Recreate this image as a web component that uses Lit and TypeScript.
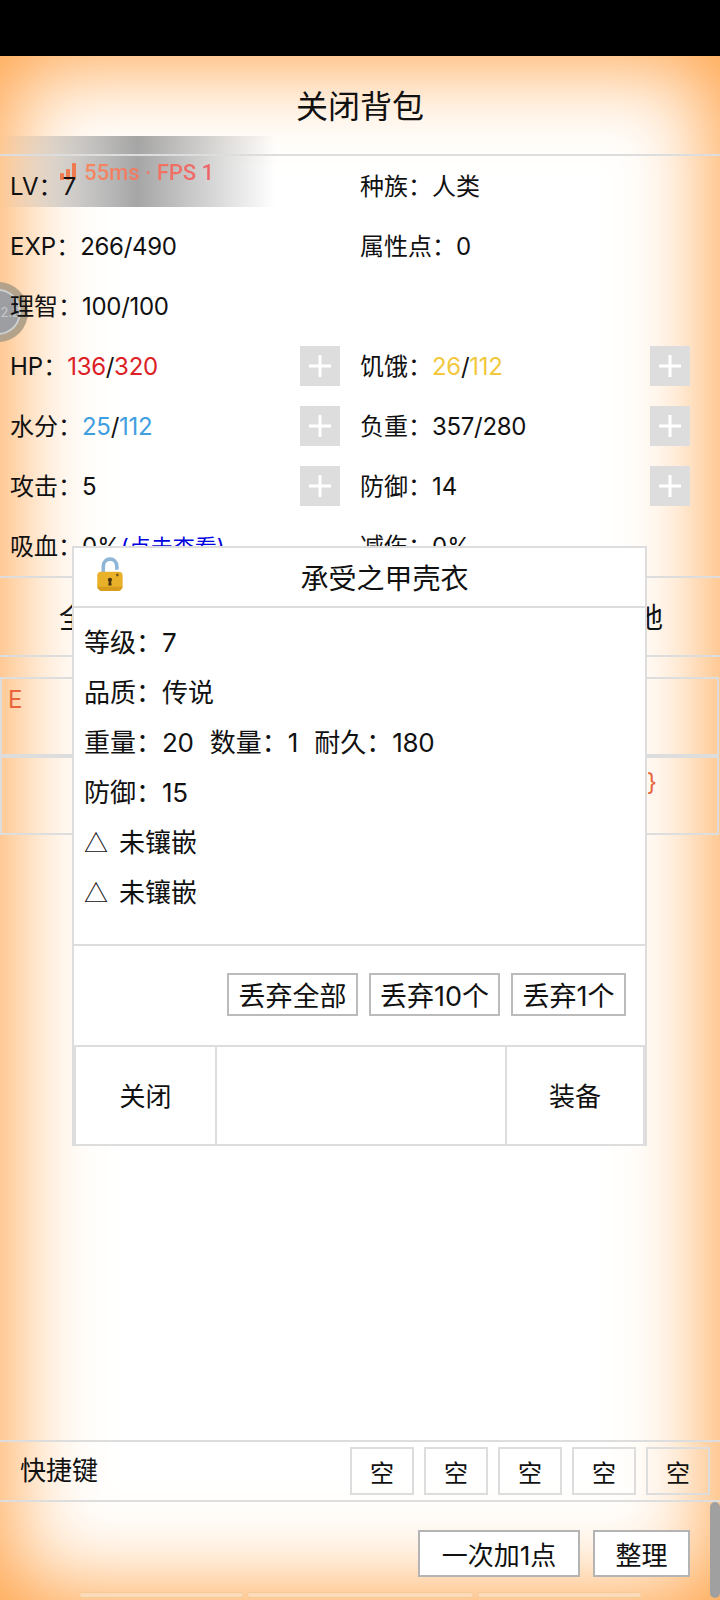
import { LitElement, html, css, svg } from "lit";
import { customElement } from "lit/decorators.js";

const plus = svg`<svg width="40" height="40" viewBox="0 0 40 40"><path d="M20 9v22M9 20h22" stroke="#fff" stroke-width="3" fill="none"/></svg>`;
const lock = svg`<svg width="32" height="36" viewBox="0 0 30 34"><path d="M7.7 15V9c0-4.600 3-7 6.400-7s6.400 2.400 6.400 7v3" fill="none" stroke="#8fb6d6" stroke-width="3.400"/><path d="M2 17.500c0-2 1.500-3.500 3.500-3.500h17c2 0 3.500 1.500 3.500 3.500v10c0 2.500-2 4.500-4.500 4.500h-15C4 32 2 30 2 27.500z" fill="#e9b02a"/><path d="M2 28c.5 2.500 2.500 4 4.500 4h15c2 0 4-1.500 4.500-4z" fill="#d89c1c"/><circle cx="14" cy="21.500" r="2" fill="#4a3410"/><path d="M13 22.500h2l.6 4.500h-3.200z" fill="#4a3410"/><circle cx="21" cy="17" r="1.300" fill="#7a5a18"/></svg>`;
const bars = svg`<svg width="16" height="18" viewBox="0 0 16 18"><g fill="#f07a50"><rect x="0" y="10" width="4" height="7" rx="1"/><rect x="6" y="6" width="4" height="11" rx="1"/><rect x="12" y="0" width="4" height="17" rx="1"/></g></svg>`;

@customElement("app-root")
export class AppRoot extends LitElement {
  static styles = css`
    :host {
      display: block;
      width: 720px;
      height: 1600px;
      position: relative;
      overflow: hidden;
      background: #000;
      font-family: "Inter", "Noto Sans CJK SC", sans-serif;
      color: #111;
      font-size: 24px;
    }
    .bg {
      position: absolute;
      inset: 56px 0 0 0;
      background: #fff;
      box-shadow: inset 0 0 90px 8px #ff9f40;
    }
    .main {
      position: absolute;
      inset: 56px 0 0 0;
      display: flex;
      flex-direction: column;
    }
    .n { letter-spacing: -0.3px; }
    .head {
      flex: none;
      display: flex;
      align-items: center;
      justify-content: center;
      font-size: 32px;
      border-bottom: 2px solid #ddd;
      padding-bottom: 3px;
      box-sizing: border-box;
      height: 100px;
    }
    .grid {
      display: grid;
      grid-template-columns: 350px 350px;
      grid-auto-rows: 60px;
      padding-left: 10px;
    }
    .cell {
      display: flex;
      align-items: center;
      padding-right: 20px;
      justify-content: space-between;
    }
    .cell > .t { padding-bottom: 4px; }
    .plus {
      width: 40px;
      height: 40px;
      background: #ddd;
      display: flex;
    }
    .red { color: #dc2026; }
    .yellow { color: #f2c83c; }
    .blue { color: #3f9ee0; }
    .link { color: #0000e0; font-size: 22px; }
    .tabs {
      flex: none;
      height: 81px;
      box-sizing: border-box;
      border-top: 2px solid #ddd;
      border-bottom: 2px solid #ddd;
      display: flex;
      justify-content: space-between;
      align-items: center;
      padding: 0 57px 2px 59px;
      font-size: 28px;
    }
    .items {
      margin-top: 20px;
      padding: 0 1px 0 0;
      display: flex;
      flex-direction: column;
    }
    .item {
      height: 79px;
      box-sizing: border-box;
      border: 2px solid #ddd;
      color: #e8643c;
      padding: 7px 6px;
      display: flex;
      line-height: 28px;
    }
    .item.end {
      justify-content: flex-end;
      padding: 11px 60px 0 0;
    }
    .spacer { flex: 1; }
    .quick {
      flex: none;
      height: 62px;
      box-sizing: border-box;
      border-top: 2px solid #ddd;
      border-bottom: 2px solid #ddd;
      display: flex;
      align-items: center;
      padding: 0 10px 0 20px;
      font-size: 26px;
    }
    .quick .label { flex: 1; padding-bottom: 6px; }
    .slots { display: flex; gap: 10px; }
    .slot {
      width: 64px;
      height: 48px;
      box-sizing: border-box;
      border: 2px solid #ddd;
      display: flex;
      align-items: center;
      justify-content: center;
      font-size: 24px;
    }
    .actions {
      flex: none;
      height: 98px;
      box-sizing: border-box;
      padding: 28px 30px 0 0;
      display: flex;
      justify-content: flex-end;
      gap: 13px;
    }
    .btn {
      height: 47px;
      box-sizing: border-box;
      border: 2px solid #b4b4b4;
      background: #fff;
      display: flex;
      align-items: center;
      justify-content: center;
      font-size: 26px;
    }
    .b1 { width: 162px; }
    .b2 { width: 97px; }
    .dialog {
      position: absolute;
      left: 72px;
      top: 546px;
      width: 575px;
      height: 600px;
      box-sizing: border-box;
      border: 2px solid #ddd;
      background: #fff;
      display: flex;
      flex-direction: column;
    }
    .d-head {
      height: 60px;
      flex: none;
      box-sizing: border-box;
      border-bottom: 2px solid #ddd;
      display: flex;
      align-items: center;
      justify-content: center;
      font-size: 28px;
      position: relative;
      padding-left: 50px;
    }
    .d-lock { position: absolute; left: 21px; top: 9px; display: flex; }
    .d-body {
      height: 338px;
      flex: none;
      box-sizing: border-box;
      padding: 10px 0 0 10px;
      font-size: 26px;
      line-height: 50px;
      border-bottom: 2px solid #ddd;
    }
    .d-body > div { height: 50px; }
    .d-body .gap { margin-left: 16px; }
    .tri {
      font-family: "Noto Sans CJK SC", sans-serif;
      display: inline-block;
      width: 35px;
      font-size: 24px;
      line-height: 24px;
    }
    .drops {
      height: 99px;
      flex: none;
      box-sizing: border-box;
      padding: 27px 19px 0 0;
      display: flex;
      justify-content: flex-end;
      gap: 11px;
    }
    .drop {
      height: 43px;
      box-sizing: border-box;
      border: 2px solid #bbb;
      display: flex;
      align-items: center;
      justify-content: center;
      font-size: 27px;
      white-space: nowrap;
    }
    .w131 { width: 131px; }
    .w115 { width: 115px; }
    .table {
      flex: 1;
      display: grid;
      grid-template-columns: 139px 290px 1fr;
      border: 2px solid #ddd;
      border-bottom-width: 0;
      font-size: 26px;
    }
    .table div {
      display: flex;
      align-items: center;
      justify-content: center;
      padding-bottom: 2px;
    }
    .table div + div { border-left: 2px solid #ddd; }
    .fps {
      position: absolute;
      left: 0;
      top: 136px;
      width: 275px;
      height: 71px;
      background: linear-gradient(90deg, rgba(150,150,150,0), rgba(150,150,150,.85) 50%, rgba(150,150,150,0));
      display: flex;
      align-items: flex-start;
      gap: 8px;
      padding: 27px 0 0 60px;
      box-sizing: border-box;
    }
    .fps-text {
      background: linear-gradient(90deg, #f5875f, #ee6468);
      -webkit-background-clip: text;
      background-clip: text;
      color: transparent;
      font-family: "Roboto", sans-serif;
      font-weight: 500;
      font-size: 22px;
      line-height: 20px;
    }
    .ball {
      position: absolute;
      left: -32px;
      top: 282px;
      width: 60px;
      height: 60px;
      box-sizing: border-box;
      border-radius: 50%;
      border: 7px solid rgba(190,165,130,.7);
      background: #9c9ea2;
      box-shadow: inset 0 0 0 2px rgba(255,255,255,.5);
      display: flex;
      align-items: center;
      justify-content: flex-end;
      padding-right: 1px;
      color: rgba(255,255,255,.45);
      font-size: 13px;
    }
    .scroll {
      position: absolute;
      right: 0;
      top: 1502px;
      width: 10px;
      height: 96px;
      border-radius: 5px;
      background: #a0a0a0;
    }
    .strips {
      position: absolute;
      left: 79px;
      bottom: 2px;
      display: flex;
      gap: 3px;
    }
    .strip {
      height: 6px;
      box-sizing: border-box;
      border: 1px solid #f6c998;
      background: #fcdcb8;
      border-radius: 3px;
    }
    .s165 { width: 165px; }
    .s227 { width: 227px; }
  `;

  private slash(a: string, b: string, cls: string) {
    return html`<span class="n"><span class=${cls}>${a}</span>/<span class=${cls}>${b}</span></span>`;
  }

  render() {
    return html`
      <div class="bg"></div>
      <div class="fps">${bars}<span class="fps-text">55ms · FPS 1</span></div>
      <div class="ball">2.2</div>

      <div class="main">
        <div class="head">关闭背包</div>
        <div class="grid">
          <div class="cell"><span class="t">LV：7</span></div>
          <div class="cell"><span class="t">种族：人类</span></div>
          <div class="cell"><span class="t">EXP：<span class="n">266/490</span></span></div>
          <div class="cell"><span class="t">属性点：0</span></div>
          <div class="cell"><span class="t">理智：<span class="n">100/100</span></span></div>
          <div class="cell"></div>
          <div class="cell"><span class="t">HP：${this.slash("136", "320", "red")}</span><span class="plus">${plus}</span></div>
          <div class="cell"><span class="t">饥饿：${this.slash("26", "112", "yellow")}</span><span class="plus">${plus}</span></div>
          <div class="cell"><span class="t">水分：${this.slash("25", "112", "blue")}</span><span class="plus">${plus}</span></div>
          <div class="cell"><span class="t">负重：<span class="n">357/280</span></span><span class="plus">${plus}</span></div>
          <div class="cell"><span class="t">攻击：5</span><span class="plus">${plus}</span></div>
          <div class="cell"><span class="t">防御：14</span><span class="plus">${plus}</span></div>
          <div class="cell"><span class="t">吸血：0%<span class="link">(点击查看)</span></span></div>
          <div class="cell"><span class="t">减伤：0%</span></div>
        </div>
        <div class="tabs"><span>全</span><span>地</span></div>
        <div class="items">
          <div class="item">E</div>
          <div class="item end">}</div>
        </div>
        <div class="spacer"></div>
        <div class="quick">
          <span class="label">快捷键</span>
          <div class="slots">
            ${[0, 1, 2, 3, 4].map(() => html`<div class="slot">空</div>`)}
          </div>
        </div>
        <div class="actions">
          <div class="btn b1">一次加1点</div>
          <div class="btn b2">整理</div>
        </div>
      </div>

      <div class="dialog">
        <div class="d-head"><span class="d-lock">${lock}</span>承受之甲壳衣</div>
        <div class="d-body">
          <div>等级：7</div>
          <div>品质：传说</div>
          <div>重量：<span class="n">20</span><span class="gap">数量：1</span><span class="gap">耐久：<span class="n">180</span></span></div>
          <div>防御：<span class="n">15</span></div>
          <div><span class="tri">△</span>未镶嵌</div>
          <div><span class="tri">△</span>未镶嵌</div>
        </div>
        <div class="drops">
          <div class="drop w131">丢弃全部</div>
          <div class="drop w131">丢弃10个</div>
          <div class="drop w115">丢弃1个</div>
        </div>
        <div class="table"><div>关闭</div><div></div><div>装备</div></div>
      </div>

      <div class="scroll"></div>
      <div class="strips">
        <div class="strip s165"></div>
        <div class="strip s227"></div>
        <div class="strip s165"></div>
      </div>
    `;
  }
}
